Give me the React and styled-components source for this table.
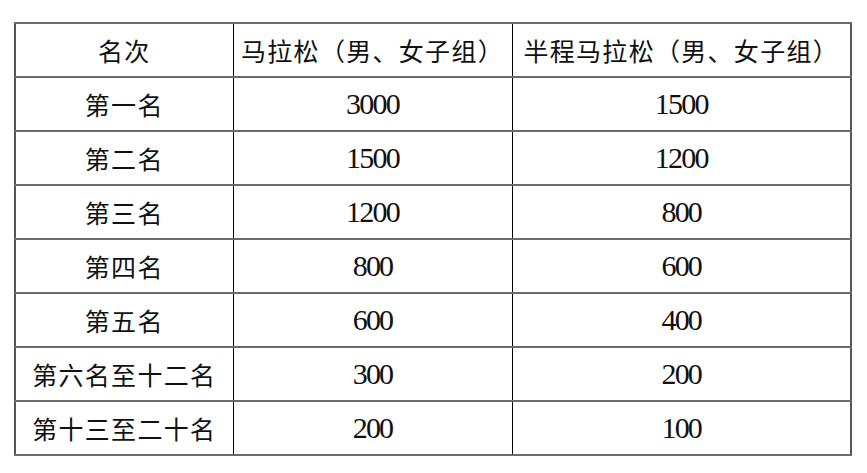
import React from "react";
import styled, { createGlobalStyle } from "styled-components";

const rows = [
  ["第一名", "3000", "1500"],
  ["第二名", "1500", "1200"],
  ["第三名", "1200", "800"],
  ["第四名", "800", "600"],
  ["第五名", "600", "400"],
  ["第六名至十二名", "300", "200"],
  ["第十三至二十名", "200", "100"],
];

const GlobalStyle = createGlobalStyle`
  body {
    margin: 0;
    background: #fff;
  }
`;

const Page = styled.div`
  padding: 22px 0 0 14px;
`;

const Table = styled.table`
  border-collapse: collapse;
  table-layout: fixed;
  border-left: 2px solid #555;
  border-right: 2px solid #555;
  color: #111;
`;

const Col = styled.col`
  width: ${(p) => p.w}px;
`;

const Cell = styled.td`
  height: 52px;
  padding: 0;
  text-align: center;
  vertical-align: middle;
  border-top: 2px solid #6a6a6a;
  border-bottom: 2px solid #6a6a6a;
  border-left: 1px solid #000;
  border-right: 1px solid #000;
  font-family: ${(p) =>
    p.num
      ? '"Liberation Serif", "Noto Sans CJK SC", serif'
      : '"Noto Sans CJK SC", serif'};
  font-size: ${(p) => (p.num ? "30px" : "25px")};
  letter-spacing: ${(p) => (p.num ? "-1.8px" : "1.3px")};
  font-weight: 400;
  line-height: 1;
  white-space: nowrap;
`;

export default function App() {
  return (
    <>
      <GlobalStyle />
      <Page>
        <Table>
          <colgroup>
            <Col w={218} />
            <Col w={279} />
            <Col w={339} />
          </colgroup>
          <tbody>
            <tr>
              <Cell>名次</Cell>
              <Cell>马拉松（男、女子组）</Cell>
              <Cell>半程马拉松（男、女子组）</Cell>
            </tr>
            {rows.map((r) => (
              <tr key={r[0]}>
                <Cell>{r[0]}</Cell>
                <Cell num>{r[1]}</Cell>
                <Cell num>{r[2]}</Cell>
              </tr>
            ))}
          </tbody>
        </Table>
      </Page>
    </>
  );
}
